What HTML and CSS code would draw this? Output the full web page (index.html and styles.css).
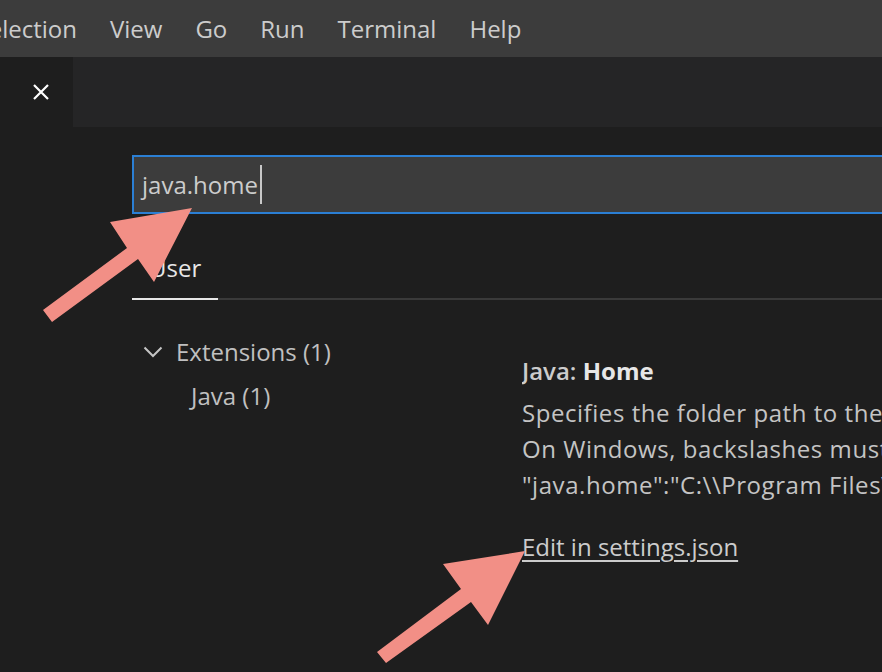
FILE: index.html
```html
<!DOCTYPE html>
<html lang="en">
<head>
<meta charset="utf-8">
<title>Settings - java.home</title>
<link rel="stylesheet" href="styles.css">
</head>
<body>
<div class="app">
  <div class="menubar">
    <span class="menu-item first">Selection</span>
    <span class="menu-item">View</span>
    <span class="menu-item">Go</span>
    <span class="menu-item">Run</span>
    <span class="menu-item">Terminal</span>
    <span class="menu-item">Help</span>
  </div>
  <div class="tabbar">
    <div class="tab active">
      <svg class="close" width="18" height="18" viewBox="0 0 18 18"><path d="M2 2 L16 16 M16 2 L2 16" stroke="#ffffff" stroke-width="2.2" fill="none"/></svg>
    </div>
  </div>
  <div class="editor">
    <div class="search"><span class="query">java.home</span><span class="caret"></span></div>
    <div class="scopes"><div class="scope-tab">User</div></div>
    <div class="content">
      <div class="tree">
        <div class="tree-row">
          <svg class="chevron" width="20" height="12" viewBox="0 0 20 12"><path d="M1.5 1.5 L10 10 L18.5 1.5" stroke="#c5c5c5" stroke-width="2" fill="none"/></svg>
          <span>Extensions (1)</span>
        </div>
        <div class="tree-row child"><span>Java (1)</span></div>
      </div>
      <div class="setting">
        <div class="setting-title"><span class="cat">Java: </span><span class="name">Home</span></div>
        <div class="desc">
          <div class="line">Specifies the folder path to the JDK (8 or more recent) used to launch the Java Language Server.</div>
          <div class="line">On Windows, backslashes must be escaped, i.e.</div>
          <div class="line">"java.home":"C:\\Program Files\\Java\\jdk1.8.0_161"</div>
        </div>
        <a class="edit-link" href="#">Edit in settings.json</a>
      </div>
    </div>
  </div>
  <svg class="arrows" width="882" height="672" viewBox="0 0 882 672">
    <polygon points="192,208 110,222 127,248 43,310 52,322 138,259 154,282" fill="#f28f86"/>
    <polygon points="525,551 443,564 461,589 377,652 386,663 471,602 488,625" fill="#f28f86"/>
  </svg>
</div>
</body>
</html>
```

FILE: styles.css
```css
html, body {
  margin: 0;
  padding: 0;
  background: #1e1e1e;
}
body {
  font-family: "Open Sans", "Noto Sans", "Liberation Sans", sans-serif;
  color: #cccccc;
  width: 882px;
  height: 672px;
  overflow: hidden;
}
.app {
  position: relative;
  width: 882px;
  height: 672px;
  overflow: hidden;
}
.menubar {
  height: 57px;
  background: #3c3c3c;
  display: flex;
  align-items: center;
  font-size: 24px;
  color: #cccccc;
  white-space: nowrap;
}
.menu-item {
  padding: 0 16.5px;
  line-height: 57px;
}
.menu-item.first {
  margin-left: -41px;
}
.tabbar {
  height: 70px;
  background: #252526;
  display: flex;
}
.tab {
  width: 73px;
  display: flex;
  align-items: center;
  justify-content: center;
}
.tab.active {
  background: #1e1e1e;
}
.close {
  margin-left: 8px;
}
.editor {
  padding: 28px 0 0 132px;
}
.search {
  height: 55px;
  border: 2px solid #2b7fd4;
  border-right: none;
  background: #3c3c3c;
  display: flex;
  align-items: center;
  padding-left: 8px;
  font-size: 24px;
  color: #cccccc;
}
.caret {
  width: 2px;
  height: 39px;
  background: #c8c8c8;
  margin-left: 2px;
}
.scopes {
  margin-top: 32px;
  border-bottom: 2px solid #3a3a3a;
  display: flex;
}
.scope-tab {
  padding: 0 17px 8px;
  line-height: 44px;
  font-size: 24px;
  color: #e7e7e7;
  border-bottom: 2px solid #e7e7e7;
  margin-bottom: -2px;
}
.content {
  display: flex;
  align-items: flex-start;
  margin-top: 29px;
}
.tree {
  flex: 0 0 390px;
  font-size: 24px;
  color: #c0c0c0;
}
.tree-row {
  height: 44px;
  display: flex;
  align-items: center;
  padding-left: 11px;
  gap: 13px;
}
.tree-row.child {
  padding-left: 59px;
}
.chevron {
  margin-top: 2px;
}
.setting {
  margin-top: 24px;
  font-size: 24px;
  white-space: nowrap;
  min-width: 0;
  overflow: hidden;
}
.setting-title {
  line-height: 36px;
}
.cat {
  font-weight: 600;
  color: #cccccc;
}
.name {
  font-weight: 700;
  color: #e7e7e7;
}
.desc {
  margin-top: 6px;
  line-height: 36px;
  color: #c4c4c4;
  letter-spacing: 0.55px;
}
.edit-link {
  display: inline-block;
  margin-top: 26px;
  line-height: 36px;
  color: #cccccc;
  text-decoration: underline;
  text-underline-offset: 4px;
}
.arrows {
  position: absolute;
  left: 0;
  top: 0;
  pointer-events: none;
}
```
